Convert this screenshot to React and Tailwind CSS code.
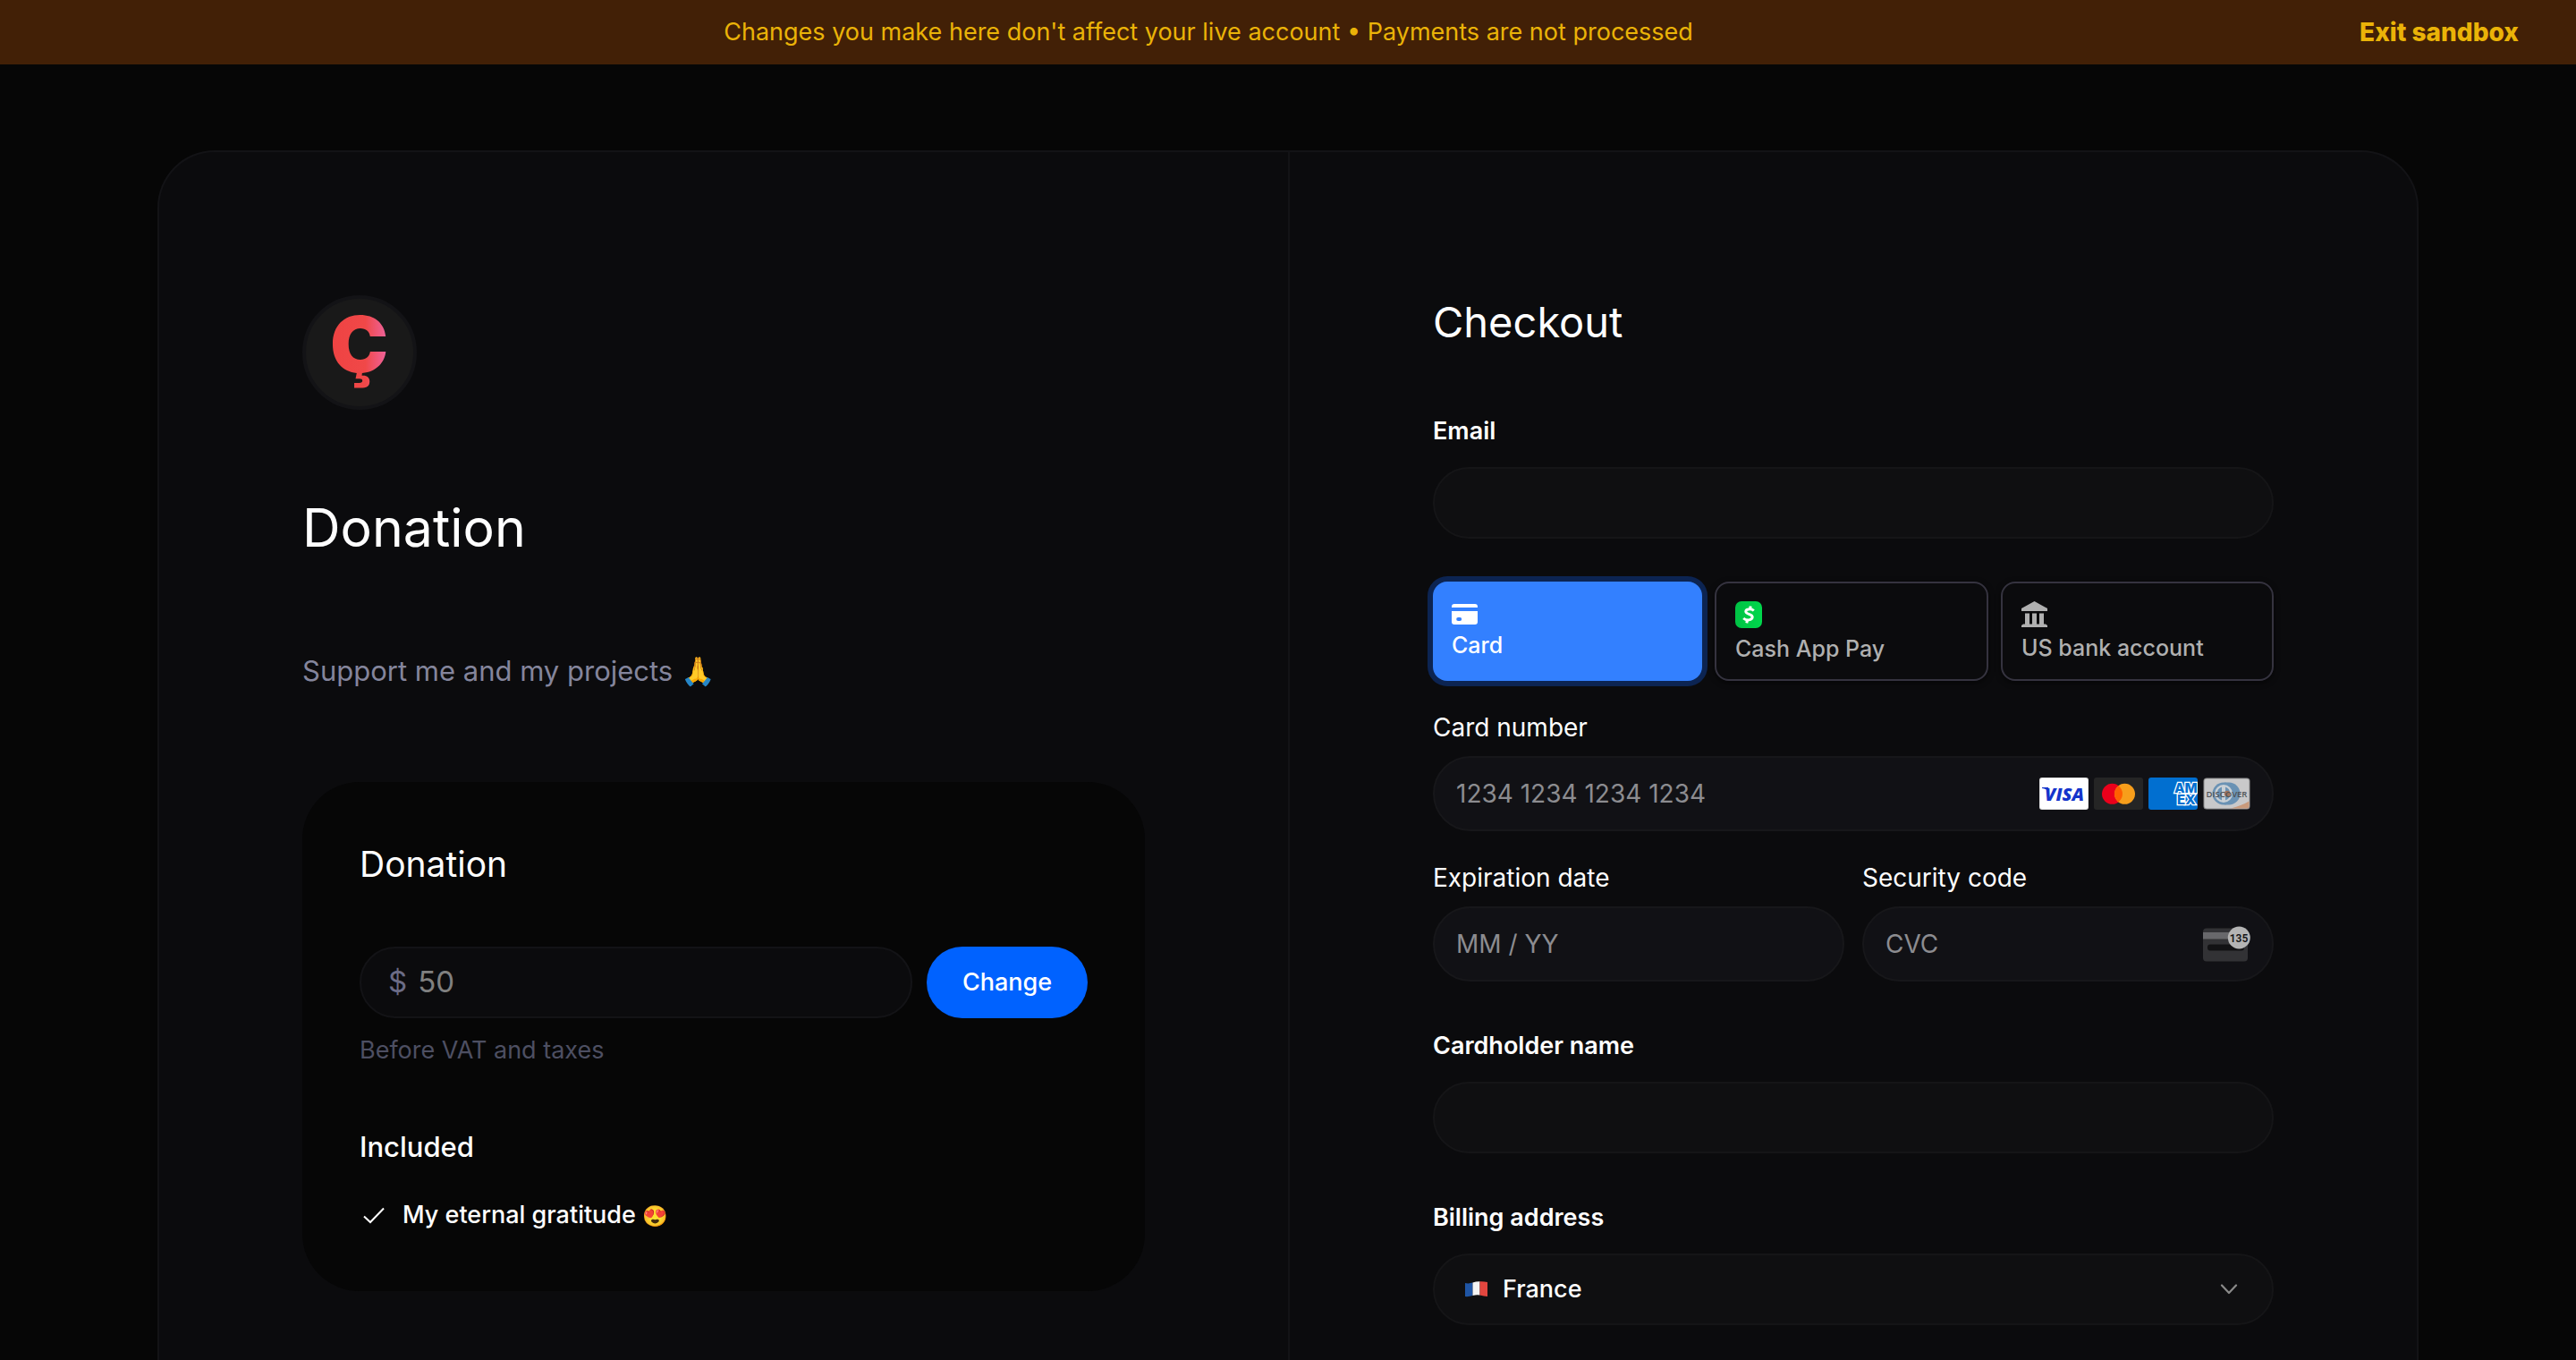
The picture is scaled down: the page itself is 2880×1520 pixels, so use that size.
function BrandLogo() {
  return (
    <div className="size-32 rounded-full border-4 border-[#131316] bg-[#191919]">
      <svg viewBox="4 4 120 120" className="size-full overflow-visible" role="img" aria-label="Ç">
        <defs>
          <linearGradient id="logo-fill" gradientUnits="userSpaceOnUse" x1="34" y1="0" x2="95" y2="0">
            <stop offset="0" stopColor="#ef4343" />
            <stop offset="0.6" stopColor="#f04848" />
            <stop offset="1" stopColor="#ee649e" />
          </linearGradient>
        </defs>
        <text
          x="63.500"
          y="86"
          textAnchor="middle"
          fontFamily="Inter, sans-serif"
          fontWeight="900"
          fontSize="87"
          fill="url(#logo-fill)"
        >
          Ç
        </text>
      </svg>
    </div>
  );
}

function CheckIcon() {
  return (
    <svg viewBox="0 0 24 20" className="h-5 w-6 shrink-0" fill="none" stroke="#fff" strokeWidth="2" aria-hidden="true">
      <path d="M1 10.500 8 17 23 1.500" />
    </svg>
  );
}

function CardIcon() {
  return (
    <svg viewBox="0 0 29 23" className="h-[23px] w-[29px]" aria-hidden="true">
      <path d="M3 0h23a3 3 0 0 1 3 3v1H0V3a3 3 0 0 1 3-3Z" fill="#fff" />
      <path
        fillRule="evenodd"
        d="M0 8h29v12a3 3 0 0 1-3 3H3a3 3 0 0 1-3-3V8Zm7.200 7a2 2 0 0 0 0 4h2a2 2 0 0 0 0-4h-2Z"
        fill="#fff"
      />
    </svg>
  );
}

function CashAppIcon() {
  return (
    <svg viewBox="0 0 30 30" className="size-[30px]" aria-hidden="true">
      <defs>
        <linearGradient id="cash-fill" x1="0" y1="0" x2="1" y2="0">
          <stop offset="0" stopColor="#00c244" />
          <stop offset="1" stopColor="#00d84c" />
        </linearGradient>
      </defs>
      <rect width="30" height="30" rx="7" fill="url(#cash-fill)" />
      <g fill="none" stroke="#fff" strokeWidth="3">
        <path d="M20.800 10.500c-2.600-2.300-8.800-2.300-9 .9-.2 3.600 7.600 2.400 7.400 6.400-.2 3.600-6.800 4.200-10 1.200" />
        <path d="M17.200 5.500l-.6 3M13.400 21.200l-.6 3.200" />
      </g>
    </svg>
  );
}

function BankIcon() {
  return (
    <svg viewBox="0 0 29 29" className="size-[29px]" fill="#b0b0b0" aria-hidden="true">
      <path d="M14.500 0 29 8v3H0V8L14.500 0Z" />
      <path d="M4 13.500h5V26H4zM12 13.500h5V26h-5zM20 13.500h5V26h-5z" />
      <path d="M0 29v-2l2-1.500h25l2 1.500v2z" />
    </svg>
  );
}

function VisaBadge() {
  return (
    <svg viewBox="0 0 55 36" className="h-9 w-[55px]" role="img" aria-label="Visa">
      <rect width="55" height="36" rx="3" fill="#e2e2e2" />
      <rect x="1" y="1" width="53" height="34" rx="2.500" fill="#fff" />
      <path d="M3 11h7l1 4Q7 12.500 3 12Z" fill="#1434cb" />
      <text x="28" y="26" textAnchor="middle" fontFamily="'Open Sans', sans-serif" fontWeight="800" fontStyle="italic" fontSize="20" fill="#1434cb">
        VISA
      </text>
    </svg>
  );
}

function MastercardBadge() {
  return (
    <svg viewBox="0 0 55 36" className="h-9 w-[55px]" role="img" aria-label="Mastercard">
      <rect width="55" height="36" rx="3" fill="#252525" />
      <circle cx="20.500" cy="18.300" r="11.500" fill="#eb001b" />
      <circle cx="34.500" cy="18.300" r="11.500" fill="#f79e1b" />
      <path d="M27.500 9.200a11.500 11.500 0 0 1 0 18.200 11.500 11.500 0 0 1 0-18.200Z" fill="#ff5f00" />
    </svg>
  );
}

function AmexBadge() {
  return (
    <svg viewBox="0 0 55 36" className="h-9 w-[55px]" role="img" aria-label="American Express">
      <defs>
        <clipPath id="amex-clip">
          <rect width="55" height="36" rx="3" />
        </clipPath>
      </defs>
      <g clipPath="url(#amex-clip)">
        <rect width="55" height="36" fill="#016fd0" />
        <g fontFamily="Inter, sans-serif" fontWeight="800" fontSize="15" fill="#016fd0" stroke="#fff" strokeWidth="2.600" paintOrder="stroke">
          <text x="29" y="17">AM</text>
          <text x="32" y="30">EX</text>
        </g>
      </g>
    </svg>
  );
}

function DiscoverBadge() {
  return (
    <svg viewBox="0 0 53 36" className="h-9 w-[53px]" role="img" aria-label="Discover">
      <rect x="0.500" y="0.500" width="52" height="35" rx="3.500" fill="#8f8f90" />
      <rect x="1.500" y="1.500" width="50" height="33" rx="3" fill="#c9c9ca" />
      <path d="M31 34.500Q44 31 51.500 26.500v6a2 2 0 0 1-2 2Z" fill="#c99a7c" />
      <path d="M24 5.500h5a12.500 12.500 0 0 1 0 25h-5Z" fill="#6a92b4" />
      <circle cx="23" cy="18" r="12.500" fill="#6a92b4" />
      <circle cx="23" cy="18" r="10" fill="#c9d0d6" />
      <path d="M21 10.500v15a8 8 0 0 1 0-15ZM25 10.500v15a8 8 0 0 0 0-15Z" fill="#6a92b4" />
      <circle cx="27" cy="18" r="3.200" fill="#a3745c" />
      <text x="26.500" y="21.500" textAnchor="middle" fontFamily="'Open Sans', sans-serif" fontWeight="600" fontSize="9.500" fill="#4f5357">
        DISCOVER
      </text>
    </svg>
  );
}

function CvcIcon() {
  return (
    <svg viewBox="0 0 53 40" className="h-10 w-[53px]" aria-hidden="true">
      <rect y="2.500" width="50" height="37" rx="4" fill="#323235" />
      <rect y="7" width="50" height="7.500" fill="#68686b" />
      <rect x="5" y="20.500" width="41" height="7" rx="3" fill="#121214" />
      <circle cx="40.300" cy="13" r="12.500" fill="#b4b4b4" />
      <text x="40" y="17.500" textAnchor="middle" fontFamily="Roboto, sans-serif" fontWeight="600" fontSize="12" fill="#141416">
        135
      </text>
    </svg>
  );
}

function FranceFlag() {
  return (
    <svg viewBox="0 0 25 18" className="h-[18px] w-[25px]" aria-hidden="true">
      <path d="M0 2Q4 3 8.500 1.600V16Q4 17.500 0 17Z" fill="#1f55a5" />
      <path d="M8.500 1.600Q12.500 0 16.500.2V15.500Q12.500 15 8.500 16Z" fill="#f4f4f4" />
      <path d="M16.500.2Q21 0 25 1V17Q21 16.500 16.500 15.500Z" fill="#e2463f" />
    </svg>
  );
}

function ChevronIcon() {
  return (
    <svg viewBox="0 0 20 12" className="h-3 w-5" fill="none" stroke="#8a8a8a" strokeWidth="2.200" strokeLinecap="round" strokeLinejoin="round" aria-hidden="true">
      <path d="M2 1.500 10 10 18 1.500" />
    </svg>
  );
}

function DonationPanel() {
  return (
    <section className="p-40 pb-0">
      <BrandLogo />
      <h1 className="mt-24 text-[59px] leading-[72px]">Donation</h1>
      <p className="mt-[100px] text-[31px] leading-[48px] text-[#84859c]">
        Support me and my projects <span>🙏</span>
      </p>

      <div className="mt-[100px] rounded-[64px] bg-[#060606] p-16">
        <h2 className="text-[39px] leading-[56px]">Donation</h2>
        <form className="mt-16 flex gap-4" onSubmit={(e) => e.preventDefault()}>
          <label className="flex h-20 min-w-0 flex-1 items-center gap-3 rounded-full border-2 border-[#131316] bg-[#0b0b0d] px-[30px] text-[33px]">
            <span className="text-[#6b6c86]">$</span>
            <input
              type="text"
              aria-label="Amount"
              placeholder="50"
              className="w-full min-w-0 bg-transparent outline-none placeholder:text-[#808080]"
            />
          </label>
          <button type="submit" className="h-20 w-[180px] rounded-full bg-[#0062ff] text-[27px] font-medium">
            Change
          </button>
        </form>
        <p className="mt-4 text-[27px] leading-[40px] text-[#4d4f62]">Before VAT and taxes</p>
        <h3 className="mt-16 text-[31px] leading-[48px] font-medium">Included</h3>
        <ul className="mt-8">
          <li className="flex items-center gap-5 pl-1 text-[27px] leading-[40px] font-medium">
            <CheckIcon />
            <span>
              My eternal gratitude <span className="text-[23px]">😍</span>
            </span>
          </li>
        </ul>
      </div>
    </section>
  );
}

const methods = [
  { id: "card", label: "Card", icon: <CardIcon /> },
  { id: "cash", label: "Cash App Pay", icon: <CashAppIcon /> },
  { id: "bank", label: "US bank account", icon: <BankIcon /> },
];

function PaymentMethods() {
  return (
    <div role="tablist" aria-label="Payment method" className="mt-12 grid grid-cols-[301fr_306fr_305fr] gap-[14px]">
      {methods.map((m, i) => (
        <button
          key={m.id}
          type="button"
          role="tab"
          aria-selected={i === 0}
          className={
            "flex h-[111px] flex-col justify-center gap-2 rounded-2xl text-left text-[25px] leading-[30px] font-medium " +
            (i === 0
              ? "bg-[#3380ff] pl-[21px] text-white ring-6 ring-[#0c2452]"
              : "border-2 border-[#35333f] pl-[21px] text-[#b0b0b0] shadow-[0_2px_6px_rgba(0,0,0,0.6)]")
          }
        >
          {m.icon}
          {m.label}
        </button>
      ))}
    </div>
  );
}

function TextField({ id, label, type = "text" }) {
  return (
    <div className="pt-[52px]">
      <label htmlFor={id} className="block text-[27px] leading-[40px] font-semibold">
        {label}
      </label>
      <input
        id={id}
        type={type}
        className="mt-5 block h-20 w-full rounded-full border-2 border-[#151517] bg-[#0f0f11] px-9 text-[27px] outline-none"
      />
    </div>
  );
}

function CardField({ id, label, placeholder, children }) {
  return (
    <div>
      <label htmlFor={id} className="block text-[28px] leading-[40px]">
        {label}
      </label>
      <div className="mt-3 flex h-[84px] items-center rounded-full border-2 border-[#17171a] bg-[#111115] px-6">
        <input
          id={id}
          type="text"
          placeholder={placeholder}
          className="min-w-0 flex-1 bg-transparent text-[28px] outline-none placeholder:text-[#8c8c90]"
        />
        {children}
      </div>
    </div>
  );
}

function CheckoutPanel() {
  return (
    <section className="border-l-2 border-[#131316] p-40 pb-0">
      <h2 className="mb-5 text-[47px] leading-[60px]">Checkout</h2>
      <TextField id="email" label="Email" type="email" />
      <PaymentMethods />
      <div className="mt-8 grid gap-8">
        <CardField id="number" label="Card number" placeholder="1234 1234 1234 1234">
          <div className="flex gap-[6px]">
            <VisaBadge />
            <MastercardBadge />
            <AmexBadge />
            <DiscoverBadge />
          </div>
        </CardField>
        <div className="grid grid-cols-2 gap-5">
          <CardField id="expiry" label="Expiration date" placeholder="MM / YY" />
          <CardField id="cvc" label="Security code" placeholder="CVC">
            <CvcIcon />
          </CardField>
        </div>
      </div>
      <TextField id="holder" label="Cardholder name" />
      <label htmlFor="country" className="mt-[52px] block text-[27px] leading-[40px] font-semibold">
        Billing address
      </label>
      <div className="relative mt-5">
        <select
          id="country"
          className="block h-20 w-full appearance-none rounded-full border-2 border-[#151517] bg-[#0f0f11] pl-[76px] text-[27px] font-medium outline-none"
        >
          <option>France</option>
        </select>
        <div className="pointer-events-none absolute inset-0 flex items-center justify-between pr-10 pl-9">
          <FranceFlag />
          <ChevronIcon />
        </div>
      </div>
    </section>
  );
}

export default function App() {
  return (
    <div className="flex min-h-screen flex-col bg-[#060606] font-['Inter',sans-serif] text-white">
      <header className="flex h-[72px] items-center bg-[#422006] px-16 text-[27px] text-[#eab308]">
        <p className="flex-1 text-center">
          Changes you make here don't affect your live account • Payments are not processed
        </p>
        <button type="button" className="text-[28px] font-extrabold">
          Exit sandbox
        </button>
      </header>
      <main className="mx-44 mt-24 grid flex-1 grid-cols-2 rounded-t-[64px] border-2 border-b-0 border-[#131316] bg-[#0b0b0d]">
        <DonationPanel />
        <CheckoutPanel />
      </main>
    </div>
  );
}
